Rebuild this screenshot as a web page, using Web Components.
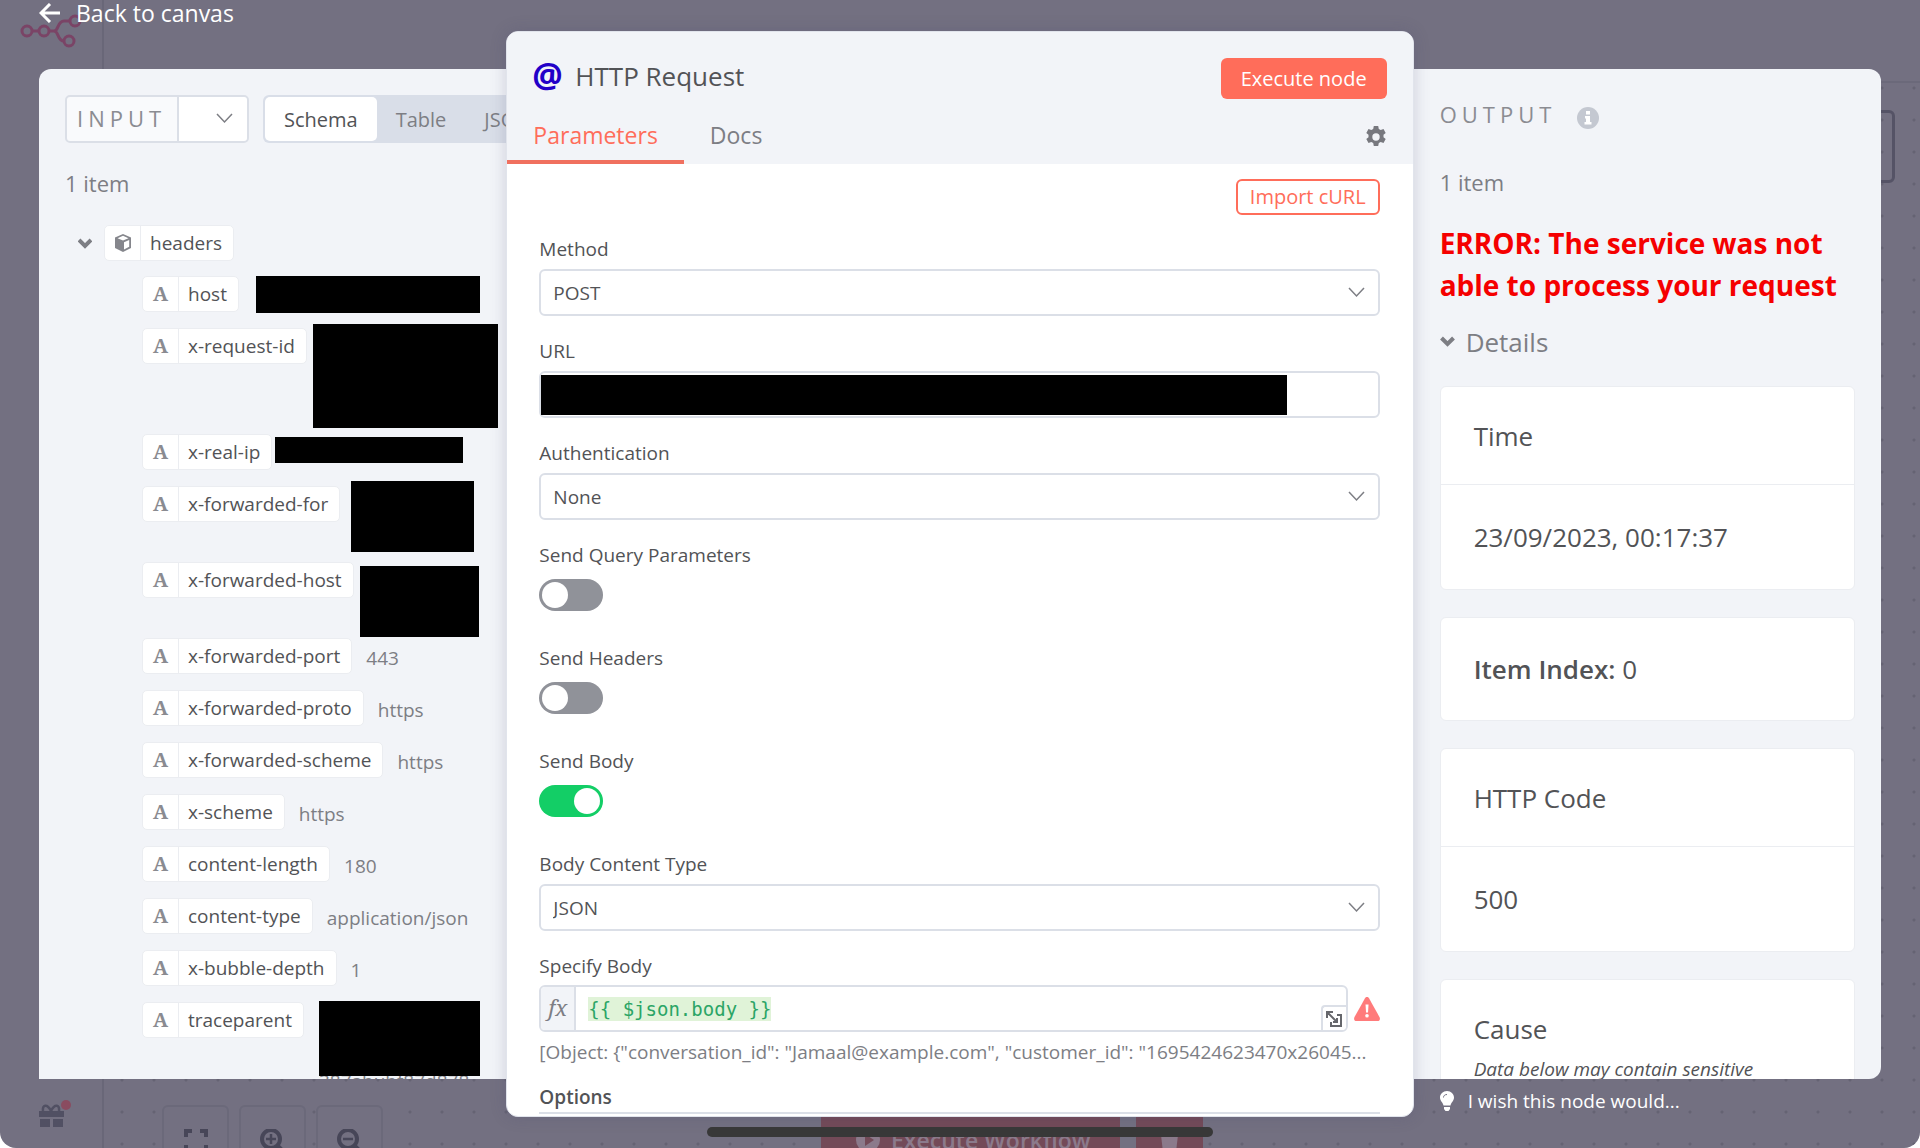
<!DOCTYPE html>
<html lang="en">
<head>
<meta charset="utf-8">
<title>HTTP Request</title>
<style>
  html, body { height: 100%; margin: 0; }
  body {
    background: #fff;
    font-family: "Open Sans", "Noto Sans", sans-serif;
    color: #555;
    overflow: hidden;
    --fs-s: 19px; --fs-b: 20px; --fs-m: 22px; --fs-t: 23px; --fs-l: 26px; --fs-xl: 28px;
    --lh-s: 26px; --lh-m: 30px; --lh-l: 36px;
    --primary: #ff6d5a;
    --panel: #f2f4f8;
    --line: #dbdfe7;
    --soft: #ebedf1;
    --muted: #7d7e84;
    --text: #525356;
  }
</style>
</head>
<body>
<node-view></node-view>

<script>
const define = (name, html, setup) => {
  const template = document.createElement('template');
  template.innerHTML = `<style>*,*::before{box-sizing:border-box} button,input,select{font:inherit;color:inherit;margin:0} svg{display:block;flex:none}</style>` + html;
  customElements.define(name, class extends HTMLElement {
    constructor() {
      super();
      this.attachShadow({ mode: 'open' }).append(template.content.cloneNode(true));
    }
    connectedCallback() { if (setup) setup(this, this.shadowRoot); }
  });
};

/* Dimmed editor behind the dialog */
define('canvas-backdrop', `
<style>
  :host { position: absolute; inset: 0; overflow: hidden; background: #737081; border-radius: 0 0 16px 16px; }
  .layout { display: flex; height: 100%; }
  .side { width: 104px; border-right: 2px solid #696778; display: flex; flex-direction: column; justify-content: space-between; padding: 14px 0 16px 20px; }
  .gift { margin-left: 18px; }
  .main { flex: 1; display: flex; flex-direction: column; }
  .top { height: 83px; border-bottom: 2px solid #6b697a; }
  .board { flex: 1; position: relative; background: radial-gradient(circle, #656373 1px, transparent 2px) 2px 21px / 32px 32px; }
  .tools { position: absolute; left: 58px; right: 0; bottom: -24px; display: flex; gap: 10px; }
  .tools button { width: 67px; height: 67px; padding: 22px 0 0; display: flex; justify-content: center; background: #737081; border: 2px solid #6b697a; border-radius: 6px; }
  .run { position: absolute; left: 717px; bottom: -26px; display: flex; gap: 16px; }
  .run button { border: 0; height: 68px; background: #734a58; color: #8b7a8b; display: flex; align-items: center; gap: 10px; font-size: var(--fs-t); font-weight: 600; padding: 0 34px; white-space: nowrap; }
  .run .exec { width: 299px; }
  .run .trash { width: 67px; padding: 0 24px; }
  .node { position: absolute; right: 25px; top: 27px; width: 140px; height: 73px; border: 3px solid #555366; border-radius: 6px; }
</style>
<div class="layout">
  <div class="side">
    <svg width="62" height="36" viewBox="0 0 62 36" fill="none" stroke="#7a4466" stroke-width="3">
      <circle cx="7" cy="17" r="5"/><circle cx="24" cy="17" r="5"/><circle cx="55" cy="7" r="5"/><circle cx="49" cy="27" r="5"/>
      <path d="M12 17h7M29 17h5c5 0 3-10 10-10h6M34 17c5 0 3 10 10 10"/>
    </svg>
    <svg class="gift" width="34" height="32" viewBox="0 0 34 32">
      <path fill="#515063" d="M1 11h25v6H1zM2 19h10v8H2zM15 19h10v8H15z"/>
      <path fill="none" stroke="#515063" stroke-width="2.5" d="M13 11C9 3 4 5 5 11M13 11c4-8 9-6 8 0"/>
      <circle cx="28" cy="5" r="5" fill="#8a4c60"/>
    </svg>
  </div>
  <div class="main">
    <div class="top"></div>
    <div class="board">
      <div class="node"></div>
      <div class="tools">
        <button aria-label="Fit view"><svg width="24" height="24" viewBox="0 0 24 24" fill="none" stroke="#474658" stroke-width="4"><path d="M2 8V2h6M16 2h6v6M22 16v6h-6M8 22H2v-6"/></svg></button>
        <button aria-label="Zoom in"><svg width="28" height="28" viewBox="0 0 28 28" fill="none" stroke="#474658" stroke-width="4"><circle cx="12" cy="10" r="9"/><path d="M18 16l8 8"/><path stroke-width="2.5" d="M7 10h10M12 5v10"/></svg></button>
        <button aria-label="Zoom out"><svg width="28" height="28" viewBox="0 0 28 28" fill="none" stroke="#474658" stroke-width="4"><circle cx="12" cy="10" r="9"/><path d="M18 16l8 8"/><path stroke-width="2.5" d="M7 10h10"/></svg></button>
      </div>
      <div class="run">
        <button class="exec"><svg width="26" height="26" viewBox="0 0 26 26"><circle cx="13" cy="13" r="12" fill="#8b7a8b"/><path d="M10 7l9 6-9 6z" fill="#734a58"/></svg>Execute Workflow</button>
        <button class="trash" aria-label="Clear execution"><svg width="19" height="24" viewBox="0 0 19 24"><path fill="#8b7a8b" d="M0 2h19v4H0zM1 7h17l-2 17H3z"/></svg></button>
      </div>
    </div>
  </div>
</div>`);

define('redaction-box', `<style>:host { display: block; background: #000; flex: none; position: relative; z-index: 1; }</style>`);

/* One key of the schema tree; the slot takes its value */
define('schema-item', `
<style>
  :host { display: flex; align-items: flex-start; height: 37px; }
  :host([lines="2"]) { height: 61px; }
  :host([lines="3"]) { height: 91px; }
  .chip { display: flex; flex: none; height: 36px; background: #fff; border: 1px solid var(--soft); border-radius: 5px; }
  .type { width: 36px; display: flex; align-items: center; justify-content: center; border-right: 1px solid var(--soft); font: 700 20px/34px "Noto Serif", "Liberation Serif", serif; color: #8a8b91; }
  .name { padding: 0 11px 0 9px; font-size: var(--fs-s); line-height: 34px; color: var(--text); }
  .value { display: flex; flex-direction: column; font-size: var(--fs-s); line-height: var(--lh-s); padding-top: 7px; margin-left: 14px; color: var(--muted); }
  :host([masked]) .value { padding: 0; margin: 0; }
</style>
<div class="chip"><span class="type">A</span><span class="name"></span></div>
<div class="value"><slot></slot></div>`, (el, root) => {
  root.querySelector('.name').textContent = el.getAttribute('name');
  if (el.hasAttribute('object')) {
    root.querySelector('.type').innerHTML = '<svg width="18" height="18" viewBox="0 0 18 18"><path fill="#85868c" d="M9 0l8 3.500v10.500L9 18l-8-4V3.500z"/><path fill="#fff" d="M9 1.800l5.500 2.400L9 6.400 3.500 4.200zM10 8.200l5.200-2.300v6.900L10 15.500z"/></svg>';
  }
});

define('input-panel', `
<style>
  :host { display: block; background: var(--panel); border-radius: 12px 0 0 0; padding: 26px 0 0 26px; overflow: hidden; min-width: 0; }
  .bar { display: flex; gap: 14px; height: 48px; }
  .source { display: flex; flex: none; border: 2px solid var(--line); border-radius: 5px; background: #f9fafc; }
  .source label { width: 112px; padding-left: 10px; font-size: var(--fs-m); line-height: 42px; letter-spacing: 5px; color: #8b8c92; border-right: 2px solid var(--line); }
  .pick { position: relative; display: flex; }
  .pick select { width: 68px; appearance: none; border: 0; background: #fff; border-radius: 0 4px 4px 0; }
  .pick svg { position: absolute; right: 14px; top: 16px; pointer-events: none; }
  .views { display: flex; flex: none; padding: 2px; background: #d9dee8; border-radius: 6px; }
  .views button { border: 0; background: none; padding: 0 19px; font-size: var(--fs-b); font-weight: 500; color: var(--muted); border-radius: 5px; }
  .views button[aria-selected="true"] { background: #fff; color: var(--text); }
  .count { margin: 25px 0 27px; font-size: var(--fs-m); line-height: var(--lh-m); color: var(--muted); }
  .root { display: flex; align-items: center; gap: 12px; margin-left: 13px; }
  .keys { display: flex; flex-direction: column; gap: 15px; margin: 14px 0 0 77px; }
</style>
<div class="bar">
  <div class="source"><label for="src">INPUT</label>
    <div class="pick"><select id="src"><option></option></select>
      <svg width="17" height="11" viewBox="0 0 17 11" fill="none" stroke="#7d7e84" stroke-width="1.500"><path d="M1 1l7.500 8L16 1"/></svg></div></div>
  <div class="views" role="tablist"><button role="tab" aria-selected="true">Schema</button><button role="tab">Table</button><button role="tab">JSON</button></div>
</div>
<p class="count">1 item</p>
<div class="root">
  <svg width="14" height="11" viewBox="0 0 14 11" fill="none" stroke="#7d7e84" stroke-width="4"><path d="M1 2l6 6 6-6"/></svg>
  <schema-item name="headers" object></schema-item>
</div>
<div class="keys">
  <schema-item name="host" masked><redaction-box style="width:224px;height:37px;margin-left:17px"></redaction-box></schema-item>
  <schema-item name="x-request-id" lines="3" masked><redaction-box style="width:185px;height:104px;margin:-4px 0 0 6px"></redaction-box></schema-item>
  <schema-item name="x-real-ip" masked><redaction-box style="width:188px;height:26px;margin:3px 0 0 3px"></redaction-box></schema-item>
  <schema-item name="x-forwarded-for" lines="2" masked><redaction-box style="width:123px;height:71px;margin:-5px 0 0 11px"></redaction-box></schema-item>
  <schema-item name="x-forwarded-host" lines="2" masked><redaction-box style="width:119px;height:71px;margin:4px 0 0 6px"></redaction-box></schema-item>
  <schema-item name="x-forwarded-port">443</schema-item>
  <schema-item name="x-forwarded-proto">https</schema-item>
  <schema-item name="x-forwarded-scheme">https</schema-item>
  <schema-item name="x-scheme">https</schema-item>
  <schema-item name="content-length">180</schema-item>
  <schema-item name="content-type">application/json</schema-item>
  <schema-item name="x-bubble-depth">1</schema-item>
  <schema-item name="traceparent" lines="3" masked><redaction-box style="width:161px;height:75px;margin:-1px 0 0 15px"></redaction-box><span style="margin:-8px 0 0 15px">387abubf87d878</span></schema-item>
</div>`);

define('field-select', `
<style>
  :host { display: flex; flex-direction: column; gap: 7px; margin-bottom: 22px; }
  label { font-size: var(--fs-s); line-height: var(--lh-s); color: var(--text); }
  .box { position: relative; display: flex; }
  select { flex: 1; height: 47px; appearance: none; background: #fff; border: 2px solid var(--line); border-radius: 6px; padding: 0 12px; font-size: var(--fs-s); color: var(--text); }
  svg { position: absolute; right: 15px; top: 18px; pointer-events: none; }
</style>
<label for="f"></label>
<div class="box"><select id="f"><option></option></select>
<svg width="17" height="11" viewBox="0 0 17 11" fill="none" stroke="#7d7e84" stroke-width="1.500"><path d="M1 1l7.500 8L16 1"/></svg></div>`, (el, root) => {
  root.querySelector('label').textContent = el.getAttribute('label');
  root.querySelector('option').textContent = el.getAttribute('value');
});

define('field-switch', `
<style>
  :host { display: flex; flex-direction: column; align-items: flex-start; gap: 11px; margin-bottom: 34px; }
  label { font-size: var(--fs-s); line-height: var(--lh-s); color: var(--text); }
  input { appearance: none; width: 64px; height: 32px; border-radius: 16px; background: #909299; padding: 3px; display: flex; }
  input::before { content: ""; width: 26px; height: 26px; border-radius: 50%; background: #fff; }
  input:checked { background: #13ce66; justify-content: flex-end; }
</style>
<label for="f"></label><input type="checkbox" role="switch" id="f">`, (el, root) => {
  root.querySelector('label').textContent = el.getAttribute('label');
  root.querySelector('input').checked = el.hasAttribute('on');
});

define('field-url', `
<style>
  :host { display: flex; flex-direction: column; gap: 7px; margin-bottom: 22px; }
  label { font-size: var(--fs-s); line-height: var(--lh-s); color: var(--text); }
  .box { position: relative; display: flex; }
  input { flex: 1; height: 47px; border: 2px solid var(--line); border-radius: 6px; padding: 0 12px; background: #fff; }
  redaction-box { position: absolute; left: 2px; top: 4px; bottom: 3px; width: 88.7%; }
</style>
<label for="f">URL</label><div class="box"><input id="f" type="text"><redaction-box></redaction-box></div>`);

define('field-expression', `
<style>
  :host { display: flex; flex-direction: column; gap: 6px; }
  label { font-size: var(--fs-s); line-height: var(--lh-s); color: var(--text); }
  .row { display: flex; align-items: center; gap: 6px; }
  .box { position: relative; flex: 1; display: flex; align-items: center; height: 47px; border: 2px solid var(--line); border-radius: 6px; overflow: hidden; }
  .fx { width: 35px; height: 100%; text-align: center; background: var(--panel); border-right: 2px solid var(--line); font: italic 22px/40px "Noto Serif", "Liberation Serif", serif; color: #7d7e84; }
  input { margin-left: 12px; width: 16ch; height: 24px; border: 0; padding: 0; background: #e0f3d8; color: #2ba566; font: var(--fs-s)/24px "DejaVu Sans Mono", monospace; }
  .grow { position: absolute; right: 0; bottom: 0; width: 25px; height: 25px; padding: 0; display: grid; place-items: center; background: #fff; border: solid var(--line); border-width: 2px 0 0 2px; border-radius: 4px 0 0 0; }
  .hint { margin: 1px 0 0; font-size: var(--fs-s); line-height: var(--lh-s); color: var(--muted); white-space: nowrap; overflow: hidden; }
</style>
<label for="f">Specify Body</label>
<div class="row"><div class="box"><span class="fx">fx</span><input id="f" value="{{ $json.body }}">
  <button class="grow" aria-label="Open editor"><svg width="16" height="16" viewBox="0 0 16 16" fill="none" stroke="#66676c" stroke-width="2"><path d="M7 1H1v6M1 1l9 9M5 11v4h10V4h-4M11 7v4H7"/></svg></button></div>
  <svg width="26" height="24" viewBox="0 0 26 24"><path fill="#ff7b7b" d="M13 0c1 0 1.500.500 2 1.300l10.600 19c.800 1.700 0 3.700-2 3.700H2.400c-2 0-2.800-2-2-3.700l10.600-19C11.500.500 12 0 13 0z"/><path fill="#fff" d="M11.500 7.500h3l-.500 8h-2z"/><circle cx="13" cy="18.800" r="1.800" fill="#fff"/></svg></div>
<p class="hint">[Object: {"conversation_id": "Jamaal@example.com", "customer_id": "1695424623470x26045...</p>`);

define('node-modal', `
<style>
  :host { display: flex; flex-direction: column; background: #fff; border-radius: 12px; overflow: hidden; box-shadow: 0 0 16px rgba(70, 68, 110, .22); border: 1px solid #e1e4ec; min-width: 0; }
  header { background: var(--panel); height: 132px; flex: none; display: flex; flex-direction: column; justify-content: space-between; }
  .title { display: flex; align-items: flex-start; gap: 13px; padding: 26px 26px 0 25px; color: var(--text); }
  .at { width: 30px; font: 700 34px/32px "Open Sans", sans-serif; color: #2200c8; }
  h1 { flex: 1; margin: 0; font-size: var(--fs-l); line-height: var(--lh-l); font-weight: 500; }
  .exec { height: 41px; padding: 0 20px; border: 0; border-radius: 6px; background: var(--primary); color: #fff; font-size: var(--fs-b); font-weight: 500; }
  nav { display: flex; align-items: center; padding-right: 26px; }
  nav a { padding: 0 26px; height: 54px; line-height: 50px; font-size: var(--fs-t); font-weight: 500; color: var(--muted); text-decoration: none; border-bottom: 4px solid transparent; }
  nav a.on { color: var(--primary); border-color: #f0705f; }
  .gear { margin-left: auto; padding: 0; border: 0; background: none; }
  .body { flex: 1; overflow: hidden; padding: 15px 33px 0 32px; }
  .import { display: block; margin: 0 0 21px auto; height: 36px; padding: 0 12px; background: #fff; border: 2px solid var(--primary); border-radius: 6px; color: var(--primary); font-size: var(--fs-b); line-height: 30px; font-weight: 500; }
  h2 { margin: 18px 0 0; font-size: var(--fs-s); line-height: 29px; font-weight: 600; color: var(--text); border-bottom: 2px solid var(--line); }
</style>
<header>
  <div class="title"><span class="at">@</span><h1>HTTP Request</h1><button class="exec">Execute node</button></div>
  <nav><a class="on" href="#parameters">Parameters</a><a href="#docs">Docs</a>
    <button class="gear" aria-label="Settings"><svg width="22" height="22" viewBox="0 0 22 22"><path fill="#77787e" fill-rule="evenodd" d="M8.800 0h4.400l.6 2.900 1.900 1.100 2.800-1 2.200 3.900-2.200 1.900v2.400l2.200 1.900-2.200 3.900-2.800-1-1.900 1.100-.6 2.900H8.800l-.6-2.900L6.300 16l-2.800 1-2.200-3.900 2.200-1.900V8.800L1.300 6.900 3.500 3l2.800 1 1.900-1.100zM11 7.300a3.700 3.700 0 1 0 0 7.400 3.700 3.700 0 0 0 0-7.400z"/></svg></button></nav>
</header>
<div class="body">
  <button class="import">Import cURL</button>
  <field-select label="Method" value="POST"></field-select>
  <field-url></field-url>
  <field-select label="Authentication" value="None"></field-select>
  <field-switch label="Send Query Parameters"></field-switch>
  <field-switch label="Send Headers"></field-switch>
  <field-switch label="Send Body" on></field-switch>
  <field-select label="Body Content Type" value="JSON"></field-select>
  <field-expression></field-expression>
  <h2>Options</h2>
</div>`);

define('detail-card', `
<style>
  :host { display: block; background: #fff; border: 1px solid var(--soft); border-radius: 6px; font-size: var(--fs-l); line-height: var(--lh-l); color: var(--text); }
  .head { padding: 31px 33px 30px; }
  .body { padding: 34px 33px; border-top: 1px solid var(--soft); }
  :host([single]) .head { padding: 33px; }
  :host([single]) .body { display: none; }
</style>
<div class="head"><slot></slot></div><div class="body"><slot name="body"></slot></div>`);

define('output-panel', `
<style>
  :host { display: block; background: var(--panel); border-radius: 0 12px 12px 0; padding: 30px 26px 0; overflow: hidden; min-width: 0; min-height: 0; }
  .head { display: flex; align-items: flex-end; gap: 21px; font-size: var(--fs-m); line-height: var(--lh-m); letter-spacing: 5px; color: #8b8c92; }
  .count { margin: 38px 0 25px; font-size: var(--fs-m); line-height: var(--lh-m); color: var(--muted); }
  .error { margin: 0; font-size: var(--fs-xl); line-height: 42px; font-weight: 700; color: #f50000; }
  .details { display: flex; align-items: center; gap: 11px; margin: 18px 0 26px; font-size: var(--fs-l); line-height: var(--lh-l); font-weight: 500; color: var(--muted); }
  .cards { display: flex; flex-direction: column; gap: 27px; }
  b { font-weight: 600; }
  small { display: block; font-size: var(--fs-s); line-height: var(--lh-s); font-style: italic; margin-top: 9px; }
</style>
<div class="head">OUTPUT<svg width="22" height="22" viewBox="0 0 22 22"><circle cx="11" cy="11" r="11" fill="#c4c8d1"/><path fill="#fff" d="M9 4h4v3.500H9zM8 9h5v6h1.500v2.500h-7V15H9v-3.500H8z"/></svg></div>
<p class="count">1 item</p>
<p class="error">ERROR: The service was not able to process your request</p>
<div class="details"><svg width="15" height="12" viewBox="0 0 15 12" fill="none" stroke="#7d7e84" stroke-width="4"><path d="M1.500 2l6 6 6-6"/></svg>Details</div>
<div class="cards">
  <detail-card>Time<span slot="body">23/09/2023, 00:17:37</span></detail-card>
  <detail-card single><b>Item Index:</b> 0</detail-card>
  <detail-card>HTTP Code<span slot="body">500</span></detail-card>
  <detail-card>Cause<small>Data below may contain sensitive</small></detail-card>
</div>`);

define('node-view', `
<style>
  :host { display: block; position: relative; height: 100vh; }
  .grid { position: relative; height: 100%; display: grid; grid-template: 69px minmax(0, 1fr) 69px / 17fr 33fr 17fr; padding: 0 39px; }
  .back { grid-area: 1 / 1; align-self: start; display: flex; align-items: center; gap: 16px; height: 25px; color: #fff; text-decoration: none; font-size: var(--fs-t); line-height: 24px; font-weight: 500; }
  input-panel { grid-area: 2 / 1; }
  output-panel { grid-area: 2 / 3; }
  node-modal { grid-area: 1 / 2 / 4 / 3; margin: 31px 0; position: relative; }
  .wish { grid-area: 3 / 3; align-self: start; display: flex; align-items: center; gap: 14px; padding: 9px 0 0 26px; font-size: var(--fs-s); line-height: var(--lh-s); color: #fff; text-decoration: none; }
  .home { position: absolute; left: 50%; margin-left: -253px; bottom: 11px; width: 506px; height: 10px; border-radius: 5px; background: #383838; }
</style>
<canvas-backdrop></canvas-backdrop>
<div class="grid">
  <a class="back" href="#canvas"><svg width="21" height="20" viewBox="0 0 21 20" fill="none" stroke="#fff" stroke-width="3"><path d="M11 1l-9 9 9 9M2 10h19"/></svg>Back to canvas</a>
  <input-panel></input-panel>
  <node-modal></node-modal>
  <output-panel></output-panel>
  <a class="wish" href="#feedback"><svg width="14" height="20" viewBox="0 0 14 20"><path fill="#fff" d="M7 0c4 0 7 3 7 6.500 0 3.500-3 5-3.500 8h-7C3 11.500 0 10 0 6.500 0 3 3 0 7 0zM4 16h6v2l-1.500 2h-3L4 18z"/><path fill="none" stroke="#737081" d="M3.500 6.500C3.500 4.500 5 3.500 7 3.500"/></svg>I wish this node would...</a>
</div>
<div class="home"></div>`);
</script>
</body>
</html>
